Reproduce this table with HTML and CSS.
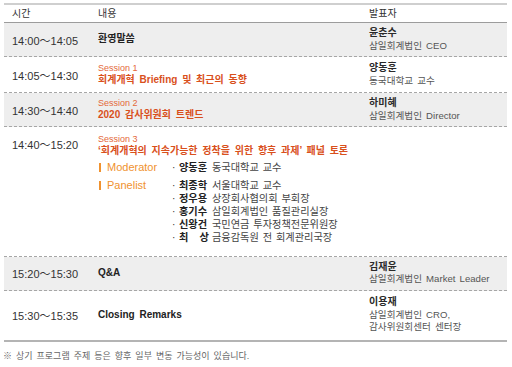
FILE: index.html
```
<!DOCTYPE html>
<html lang="ko">
<head>
<meta charset="utf-8">
<title>프로그램</title>
<link rel="stylesheet" href="styles.css">
</head>
<body>
<div class="schedule">
  <div class="row head">
    <div class="c-time">시간</div>
    <div class="c-body">내용</div>
    <div class="c-spk">발표자</div>
  </div>
  <div class="row shade r1">
    <div class="c-time">14:00～14:05</div>
    <div class="c-body"><b class="title">환영말씀</b></div>
    <div class="c-spk"><b class="name">윤춘수</b><span class="role">삼일회계법인 CEO</span></div>
  </div>
  <div class="row r2">
    <div class="c-time">14:05～14:30</div>
    <div class="c-body"><span class="session">Session 1</span><b class="title hot">회계개혁 Briefing 및 최근의 동향</b></div>
    <div class="c-spk"><b class="name">양동훈</b><span class="role">동국대학교 교수</span></div>
  </div>
  <div class="row shade r3">
    <div class="c-time">14:30～14:40</div>
    <div class="c-body"><span class="session">Session 2</span><b class="title hot">2020 감사위원회 트렌드</b></div>
    <div class="c-spk"><b class="name">하미혜</b><span class="role">삼일회계법인 Director</span></div>
  </div>
  <div class="row panel-row">
    <div class="c-time top">14:40～15:20</div>
    <div class="c-body">
      <span class="session">Session 3</span>
      <b class="title hot">‘회계개혁의 지속가능한 정착을 위한 향후 과제’ 패널 토론</b>
      <div class="panel mod">
        <div class="label">Moderator</div>
        <ul class="people">
          <li><b>양동훈</b>동국대학교 교수</li>
        </ul>
      </div>
      <div class="panel">
        <div class="label">Panelist</div>
        <ul class="people">
          <li><b>최종학</b>서울대학교 교수</li>
          <li><b>정우용</b>상장회사협의회 부회장</li>
          <li><b>홍기수</b>삼일회계법인 품질관리실장</li>
          <li><b>신왕건</b>국민연금 투자정책전문위원장</li>
          <li><b class="spread">최 상</b>금융감독원 전 회계관리국장</li>
        </ul>
      </div>
    </div>
    <div class="c-spk"></div>
  </div>
  <div class="row shade r5">
    <div class="c-time">15:20～15:30</div>
    <div class="c-body"><b class="title">Q&amp;A</b></div>
    <div class="c-spk"><b class="name">김재윤</b><span class="role">삼일회계법인 Market Leader</span></div>
  </div>
  <div class="row last r6">
    <div class="c-time">15:30～15:35</div>
    <div class="c-body"><b class="title">Closing Remarks</b></div>
    <div class="c-spk"><b class="name">이용재</b><span class="role">삼일회계법인 CRO,</span><span class="role">감사위원회센터 센터장</span></div>
  </div>
</div>
<p class="note">※ 상기 프로그램 주제 등은 향후 일부 변동 가능성이 있습니다.</p>
</body>
</html>
```
FILE: styles.css
```
html, body {
  margin: 0;
  padding: 0;
  background: #ffffff;
}
body {
  font-family: "Liberation Sans", "Noto Sans CJK KR", sans-serif;
  font-size: 10px;
  color: #333;
  word-spacing: 2px;
}
.schedule {
  margin: 3px 5px 0 4px;
  border-top: 2px solid #cfcfcf;
  border-bottom: 2px solid #b4b4b4;
}
.row {
  display: grid;
  grid-template-columns: 86px 271px 1fr;
  align-items: center;
  background-image: repeating-linear-gradient(to right, #a6a6a6 0 3px, transparent 3px 5px);
  background-size: 100% 1px;
  background-position: left bottom;
  background-repeat: no-repeat;
  padding-bottom: 1px;
}
.row > div {
  padding-left: 8px;
}
.row.shade {
  background-color: #eeeeee;
}
.row.last {
  background-image: none;
  padding-bottom: 0;
}
.row.head {
  background-image: none;
  border-bottom: 1px solid #9c9c9c;
  padding-bottom: 0;
  height: 17px;
  line-height: 18px;
  color: #333;
}
.c-time {
  font-size: 11px;
  color: #333;
  word-spacing: 0;
}
.row.head .c-time {
  font-size: 10px;
}
.c-time.top {
  align-self: start;
  padding-top: 12px;
  line-height: 12px;
}
.c-body,
.c-spk {
  display: flex;
  flex-direction: column;
  line-height: 12.5px;
}
.r1 { height: 33px; }
.r2 { height: 35px; }
.r3 { height: 33px; }
.r5 { height: 33px; }
.r6 { height: 49px; }
.title {
  font-weight: bold;
  color: #222;
  font-size: 10px;
}
.title.hot {
  color: #d9501c;
}
.session {
  font-size: 9px;
  line-height: 11px;
  color: #e4683a;
  word-spacing: 0;
}
.name {
  font-weight: bold;
  color: #2a2a2a;
}
.role {
  color: #555;
  font-size: 9.6px;
  word-spacing: 1.5px;
}
.panel-row {
  align-items: start;
}
.panel-row .c-body {
  padding-top: 7px;
  padding-bottom: 12px;
}
.panel {
  display: flex;
  margin-top: 5px;
  font-size: 10.2px;
  line-height: 13px;
  word-spacing: 1px;
}
.panel.mod {
  margin-top: 3px;
}
.label {
  width: 74px;
  flex: none;
  color: #f0922f;
  font-size: 11px;
  display: flex;
  align-items: center;
  align-self: flex-start;
  height: 13px;
}
.label::before {
  content: "";
  display: inline-block;
  width: 2px;
  height: 9px;
  background: #f0922f;
  margin: 0 6px 0 1px;
}
.people {
  list-style: none;
  margin: 0;
  padding: 0;
  color: #444;
}
.people li::before {
  content: "·";
  display: inline-block;
  width: 7px;
  color: #333;
}
.people b {
  display: inline-block;
  width: 30px;
  margin-right: 3px;
  color: #222;
}
.people b.spread {
  text-align: justify;
  text-align-last: justify;
}
.note {
  margin: 8px 0 0 3px;
  font-size: 9px;
  line-height: 12px;
  color: #666;
  word-spacing: 1.5px;
}
```
